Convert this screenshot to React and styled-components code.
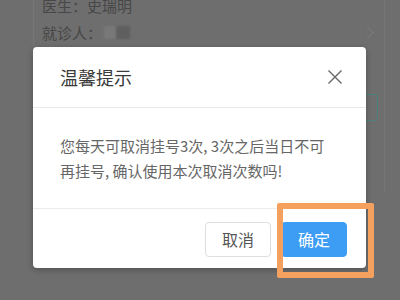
import React from 'react'
import styled, { createGlobalStyle } from 'styled-components'

const GlobalStyle = createGlobalStyle`
  * {
    margin: 0;
    padding: 0;
    box-sizing: border-box;
  }
  body {
    font-family: "Noto Sans CJK SC", "Noto Sans", sans-serif;
  }
`

// fondo de la pagina, ya oscurecido por la mascara
const Screen = styled.div`
  position: relative;
  width: 400px;
  height: 300px;
  overflow: hidden;
  background-color: #6e6e6e;
`

const Card = styled.section`
  margin: -8px 15px 0 33px;
  height: 200px;
  border-left: 1px solid #767676;
  border-right: 1px solid #767676;
  padding-left: 8px;
  display: flex;
  flex-direction: column;
`

const InfoRow = styled.div`
  display: flex;
  align-items: center;
  height: 27px;
  font-size: 15px;
  color: #474747;
  line-height: 27px;
`

const Blur = styled.span`
  display: inline-block;
  width: 26px;
  height: 13px;
  margin-left: 2px;
  background: linear-gradient(90deg, #787878 0 45%, #5f5f5f 45% 100%);
  filter: blur(1px);
`

const Chevron = styled.span`
  margin-left: auto;
  margin-right: 12px;
  width: 9px;
  height: 9px;
  border-top: 1px solid #7c7c7c;
  border-right: 1px solid #7c7c7c;
  transform: rotate(45deg);
`

const Notch = styled.div`
  margin-left: 81px;
  margin-top: 1px;
  width: 64px;
  height: 7px;
  background-color: #8a8a8a;
  border-radius: 0 0 9px 9px;
`

const SideButton = styled.div`
  align-self: flex-end;
  margin-top: 40px;
  margin-right: 6px;
  width: 40px;
  height: 27px;
  border: 1.5px solid #4a8282;
  border-radius: 4px;
`

const Dialog = styled.div`
  position: absolute;
  left: 33px;
  top: 47px;
  width: 333px;
  height: 221px;
  background-color: #fff;
  border-radius: 4px;
  box-shadow: 0 2px 6px rgba(0, 0, 0, 0.25);
  display: flex;
  flex-direction: column;
`

const Header = styled.div`
  height: 61px;
  display: flex;
  align-items: center;
  justify-content: space-between;
  padding: 0 23px 0 27px;
  border-bottom: 1px solid #e9e9e9;
`

const Title = styled.h2`
  font-size: 18px;
  font-weight: 400;
  color: #3a3a3a;
`

const Close = styled.button`
  border: none;
  background: none;
  width: 16px;
  height: 16px;
  display: flex;
`

const Body = styled.p`
  height: 101px;
  padding: 25px 20px 0 27px;
  font-size: 15px;
  line-height: 25px;
  color: #666;
  border-bottom: 1px solid #ececec;
`

const Footer = styled.div`
  flex: 1;
  display: flex;
  align-items: center;
  justify-content: flex-end;
  gap: 10px;
  padding: 1px 19px 0 0;
`

const Botao = styled.button`
  width: 66px;
  height: 35px;
  border-radius: 4px;
  font-family: inherit;
  font-size: 16px;
  border: 1px solid ${p => (p.primary ? '#3d9df5' : '#dedede')};
  background-color: ${p => (p.primary ? '#3d9df5' : '#fff')};
  color: ${p => (p.primary ? '#fff' : '#555')};
`

// marco naranja de la anotacion
const Highlight = styled.div`
  position: absolute;
  left: 277px;
  top: 203px;
  width: 97px;
  height: 75px;
  border: 6px solid #f4a05e;
  border-radius: 2px;
`

const App = () => (
  <Screen>
    <GlobalStyle />
    <Card>
      <InfoRow>医生：史瑞明</InfoRow>
      <InfoRow>
        就诊人：<Blur />
        <Chevron />
      </InfoRow>
      <Notch />
      <SideButton />
    </Card>
    <Dialog>
      <Header>
        <Title>温馨提示</Title>
        <Close>
          <svg width="16" height="16" viewBox="0 0 16 16">
            <path d="M1.5 1.5 L14.5 14.5 M14.5 1.5 L1.5 14.5" stroke="#666" strokeWidth="1.4" fill="none" />
          </svg>
        </Close>
      </Header>
      <Body>
        您每天可取消挂号3次, 3次之后当日不可
        <br />
        再挂号, 确认使用本次取消次数吗!
      </Body>
      <Footer>
        <Botao>取消</Botao>
        <Botao primary>确定</Botao>
      </Footer>
    </Dialog>
    <Highlight />
  </Screen>
)

export default App
